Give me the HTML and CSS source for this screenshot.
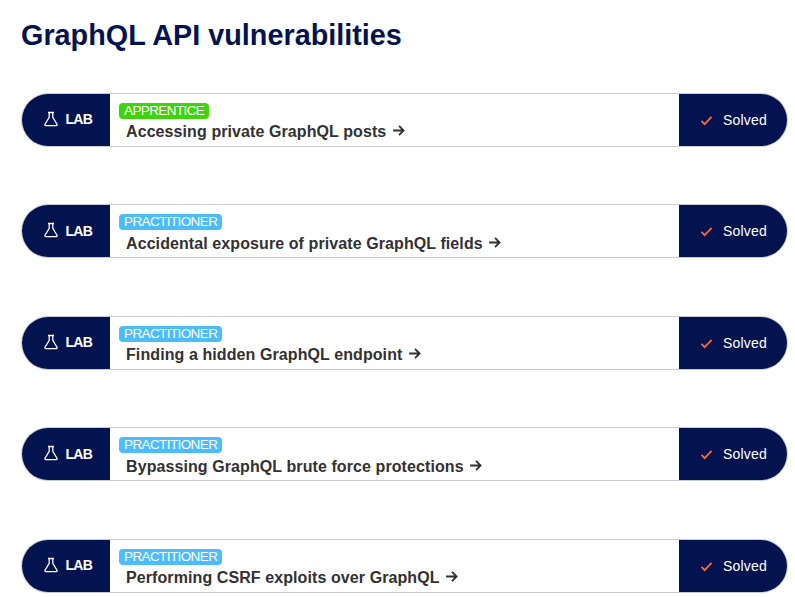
FILE: index.html
```html
<!DOCTYPE html>
<html lang="en">
<head>
    <meta charset="UTF-8">
    <meta name="viewport" content="width=device-width, initial-scale=1.0">
    <title>GraphQL API vulnerabilities</title>
    <link rel="stylesheet" href="styles.css">
</head>
<body>
    <h1>GraphQL API vulnerabilities</h1>

    <div class="lab">
        <div class="lab-tag">
            <svg class="flask" viewBox="0 0 16 16"><path d="M5 1.5h6M6.2 1.5v4.8L2 13.2c-.4.8 0 1.4.9 1.4h10.2c.9 0 1.3-.6.9-1.4L9.8 6.300V1.500"/></svg>
            <span>LAB</span>
        </div>
        <div class="lab-body">
            <span class="level apprentice">APPRENTICE</span>
            <a class="lab-link">Accessing private GraphQL posts <svg class="arrow" viewBox="0 0 12 12"><path d="M1 6h9.500M6.500 1.800L10.700 6l-4.200 4.200"/></svg></a>
        </div>
        <div class="lab-status">
            <svg class="check" viewBox="0 0 14 12"><path d="M1.500 6.500l3.500 3.500 7.500-8"/></svg>
            <span>Solved</span>
        </div>
    </div>

    <div class="lab">
        <div class="lab-tag">
            <svg class="flask" viewBox="0 0 16 16"><path d="M5 1.5h6M6.2 1.5v4.8L2 13.2c-.4.8 0 1.4.9 1.4h10.2c.9 0 1.3-.6.9-1.4L9.8 6.300V1.500"/></svg>
            <span>LAB</span>
        </div>
        <div class="lab-body">
            <span class="level practitioner">PRACTITIONER</span>
            <a class="lab-link">Accidental exposure of private GraphQL fields <svg class="arrow" viewBox="0 0 12 12"><path d="M1 6h9.500M6.500 1.800L10.700 6l-4.200 4.200"/></svg></a>
        </div>
        <div class="lab-status">
            <svg class="check" viewBox="0 0 14 12"><path d="M1.500 6.500l3.500 3.500 7.500-8"/></svg>
            <span>Solved</span>
        </div>
    </div>

    <div class="lab">
        <div class="lab-tag">
            <svg class="flask" viewBox="0 0 16 16"><path d="M5 1.5h6M6.2 1.5v4.8L2 13.2c-.4.8 0 1.4.9 1.4h10.2c.9 0 1.3-.6.9-1.4L9.8 6.300V1.500"/></svg>
            <span>LAB</span>
        </div>
        <div class="lab-body">
            <span class="level practitioner">PRACTITIONER</span>
            <a class="lab-link">Finding a hidden GraphQL endpoint <svg class="arrow" viewBox="0 0 12 12"><path d="M1 6h9.500M6.500 1.800L10.700 6l-4.200 4.200"/></svg></a>
        </div>
        <div class="lab-status">
            <svg class="check" viewBox="0 0 14 12"><path d="M1.500 6.500l3.500 3.500 7.500-8"/></svg>
            <span>Solved</span>
        </div>
    </div>

    <div class="lab">
        <div class="lab-tag">
            <svg class="flask" viewBox="0 0 16 16"><path d="M5 1.5h6M6.2 1.5v4.8L2 13.2c-.4.8 0 1.4.9 1.4h10.2c.9 0 1.3-.6.9-1.4L9.8 6.300V1.500"/></svg>
            <span>LAB</span>
        </div>
        <div class="lab-body">
            <span class="level practitioner">PRACTITIONER</span>
            <a class="lab-link">Bypassing GraphQL brute force protections <svg class="arrow" viewBox="0 0 12 12"><path d="M1 6h9.500M6.500 1.800L10.700 6l-4.200 4.200"/></svg></a>
        </div>
        <div class="lab-status">
            <svg class="check" viewBox="0 0 14 12"><path d="M1.500 6.500l3.500 3.500 7.500-8"/></svg>
            <span>Solved</span>
        </div>
    </div>

    <div class="lab">
        <div class="lab-tag">
            <svg class="flask" viewBox="0 0 16 16"><path d="M5 1.5h6M6.2 1.5v4.8L2 13.2c-.4.8 0 1.4.9 1.4h10.2c.9 0 1.3-.6.9-1.4L9.8 6.300V1.500"/></svg>
            <span>LAB</span>
        </div>
        <div class="lab-body">
            <span class="level practitioner">PRACTITIONER</span>
            <a class="lab-link">Performing CSRF exploits over GraphQL <svg class="arrow" viewBox="0 0 12 12"><path d="M1 6h9.500M6.500 1.800L10.700 6l-4.200 4.200"/></svg></a>
        </div>
        <div class="lab-status">
            <svg class="check" viewBox="0 0 14 12"><path d="M1.500 6.500l3.500 3.500 7.500-8"/></svg>
            <span>Solved</span>
        </div>
    </div>
</body>
</html>
```

FILE: styles.css
```css
body {
    font-family: "Liberation Sans", Arial, sans-serif;
    margin: 0;
    padding: 19px 7px 0 21px;
    background-color: white;
    overflow: hidden;
}
h1 {
    color: #03134f;
    font-size: 28.8px;
    line-height: 32px;
    font-weight: bold;
    margin: 0 0 41.9px;
}
.lab {
    display: flex;
    height: 54px;
    margin-bottom: 57.5px;
    box-sizing: border-box;
    border: 1px solid #c8ccd0;
    border-radius: 27px;
    overflow: hidden;
}
.lab:last-child {
    margin-bottom: 0;
}
.lab-tag {
    width: 88px;
    flex: none;
    display: flex;
    align-items: center;
    padding-left: 21px;
    box-sizing: border-box;
    gap: 6.500px;
    background-color: #03134f;
    color: white;
    font-size: 14px;
    font-weight: bold;
    letter-spacing: -0.7px;
}
.lab-tag span {
    margin-top: -1px;
}
.flask {
    width: 16px;
    height: 16px;
    margin-top: -2px;
    fill: none;
    stroke: white;
    stroke-width: 1.300;
}
.lab-body {
    flex: 1;
    padding: 9px 0 0 9px;
}
.level {
    display: block;
    width: max-content;
    height: 16px;
    line-height: 16px;
    padding: 0 5px;
    border-radius: 4px;
    color: white;
    font-size: 13.500px;
    letter-spacing: -0.6px;
}
.apprentice {
    background-color: #3dd40b;
}
.practitioner {
    background-color: #4cbdfb;
}
.lab-link {
    display: block;
    margin: 4.2px 0 0 7px;
    color: #333132;
    font-size: 16px;
    line-height: 18px;
    font-weight: bold;
    letter-spacing: 0.09px;
}
.arrow {
    width: 13px;
    height: 13px;
    margin-left: 1px;
    fill: none;
    stroke: #333132;
    stroke-width: 1.700;
}
.lab-status {
    width: 108px;
    flex: none;
    display: flex;
    align-items: center;
    padding-left: 21px;
    box-sizing: border-box;
    gap: 10px;
    background-color: #03134f;
    color: white;
    font-size: 14px;
    letter-spacing: 0.2px;
}
.check {
    width: 13px;
    height: 11px;
    margin-top: 1px;
    fill: none;
    stroke: #ff6633;
    stroke-width: 2;
}
```
